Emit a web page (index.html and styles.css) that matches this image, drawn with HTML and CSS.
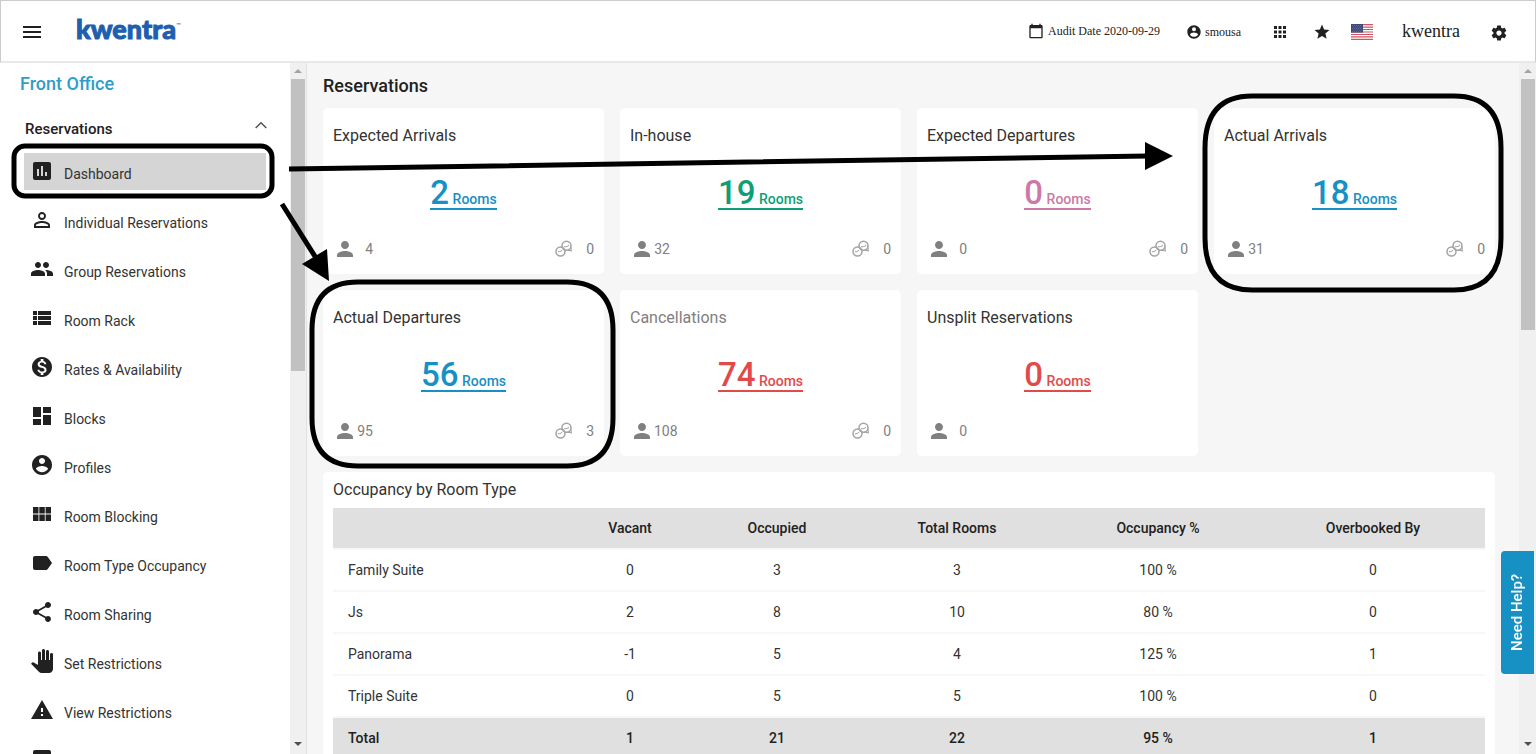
FILE: index.html
```html
<!DOCTYPE html>
<html lang="en">
<head>
  <meta charset="utf-8">
  <title>Kwentra - Front Office Dashboard</title>
  <link rel="stylesheet" href="styles.css">
</head>
<body>
  <!-- shared icons -->
  <svg class="defs" aria-hidden="true">
    <symbol id="person" viewBox="0 0 24 24"><path d="M12 12c2.21 0 4-1.79 4-4s-1.79-4-4-4-4 1.79-4 4 1.79 4 4 4zm0 2c-2.67 0-8 1.34-8 4v2h16v-2c0-2.66-5.33-4-8-4z"/></symbol>
    <symbol id="account" viewBox="0 0 24 24"><path d="M12 2C6.48 2 2 6.48 2 12s4.48 10 10 10 10-4.48 10-10S17.52 2 12 2zm0 3c1.66 0 3 1.34 3 3s-1.34 3-3 3-3-1.34-3-3 1.34-3 3-3zm0 14.2c-2.5 0-4.71-1.28-6-3.22.03-1.99 4-3.08 6-3.08 1.99 0 5.97 1.09 6 3.08-1.29 1.94-3.5 3.22-6 3.22z"/></symbol>
    <symbol id="rings" viewBox="0 0 20 20">
      <g fill="none" stroke="#a3a3a3" stroke-width="1.5">
        <circle cx="6.5" cy="12.500" r="4.500"/>
        <circle cx="12.500" cy="6.800" r="4.500"/>
        <path stroke-width="1.100" d="M4 12.500q2 1 4-1.500M10 7.500q3 1 5-1.500M16.800 7.500l.6 4.300-4-.6"/>
      </g>
    </symbol>
  </svg>

  <header class="topbar">
    <button class="icon-btn menu" aria-label="Menu"><svg viewBox="0 0 24 24"><path d="M3 18h18v-2H3v2zm0-5h18v-2H3v2zm0-7v2h18V6H3z"/></svg></button>
    <a class="logo" href="#">kwentra<sup>™</sup></a>
    <div class="tools">
      <span class="audit"><svg viewBox="0 0 24 24"><path d="M20 3h-1V1h-2v2H7V1H5v2H4c-1.100 0-2 .9-2 2v16c0 1.100.9 2 2 2h16c1.100 0 2-.9 2-2V5c0-1.100-.9-2-2-2zm0 18H4V8h16v13z"/></svg>Audit Date 2020-09-29</span>
      <a class="user" href="#"><svg><use href="#account"/></svg>smousa</a>
      <button class="icon-btn apps" aria-label="Apps"><svg viewBox="0 0 24 24"><path d="M4 8h4V4H4v4zm6 12h4v-4h-4v4zm-6 0h4v-4H4v4zm0-6h4v-4H4v4zm6 0h4v-4h-4v4zm6-10v4h4V4h-4zm-6 4h4V4h-4v4zm6 6h4v-4h-4v4zm0 6h4v-4h-4v4z"/></svg></button>
      <button class="icon-btn star" aria-label="Favourites"><svg viewBox="0 0 24 24"><path d="M12 17.270 18.180 21l-1.640-7.030L22 9.240l-7.190-.61L12 2 9.190 8.630 2 9.240l5.460 4.730L5.820 21z"/></svg></button>
      <button class="icon-btn flag" aria-label="English (US)"><svg viewBox="0 0 22 16">
        <path fill="#fff" d="M0 0h22v16H0z"/>
        <path stroke="#d0545f" stroke-width="1.230" d="M0 .6h22M0 3.100h22M0 5.500h22M0 8h22M0 10.500h22M0 12.900h22M0 15.400h22"/>
        <path fill="#3f4a78" d="M0 0h12v8.600H0z"/>
        <path stroke="#8790b3" stroke-width=".7" stroke-dasharray=".7 1.300" d="M1 1.500h10M2 3h9M1 4.500h10M2 6h9M1 7.400h10"/>
      </svg></button>
      <a class="hotel" href="#">kwentra</a>
      <button class="icon-btn gear" aria-label="Settings"><svg viewBox="0 0 24 24"><path d="M19.430 12.980c.04-.32.070-.64.070-.98s-.03-.66-.07-.98l2.110-1.650c.19-.15.240-.42.120-.64l-2-3.460c-.12-.22-.39-.3-.61-.22l-2.490 1c-.52-.4-1.080-.73-1.690-.98l-.38-2.650C14.460 2.180 14.250 2 14 2h-4c-.25 0-.46.180-.49.420l-.38 2.650c-.61.250-1.170.59-1.690.98l-2.490-1c-.23-.09-.49 0-.61.220l-2 3.460c-.13.220-.07.49.120.64l2.110 1.650c-.04.320-.07.650-.07.980s.03.660.070.980l-2.110 1.650c-.19.150-.24.420-.12.640l2 3.460c.12.220.39.300.61.220l2.490-1c.52.400 1.080.73 1.690.98l.38 2.650c.03.240.24.420.49.420h4c.25 0 .46-.18.490-.42l.38-2.650c.61-.25 1.170-.59 1.690-.98l2.490 1c.23.090.49 0 .61-.22l2-3.460c.12-.22.070-.49-.12-.64l-2.110-1.650zM12 15.500c-1.930 0-3.500-1.570-3.500-3.500s1.570-3.500 3.500-3.500 3.500 1.570 3.500 3.500-1.570 3.500-3.500 3.500z"/></svg></button>
    </div>
  </header>

  <div class="page">
    <nav class="sidebar">
      <h2>Front Office</h2>
      <button class="group">Reservations<svg viewBox="0 0 24 24"><path d="M12 8l-7 7 1.200 1.200L12 10.400l5.800 5.800L19 15z"/></svg></button>
      <a class="item active" href="#"><svg viewBox="0 0 24 24"><path d="M19 3H5c-1.100 0-2 .9-2 2v14c0 1.100.9 2 2 2h14c1.100 0 2-.9 2-2V5c0-1.100-.9-2-2-2zM9 17H7v-7h2v7zm4 0h-2V7h2v10zm4 0h-2v-4h2v4z"/></svg>Dashboard</a>
      <a class="item" href="#"><svg viewBox="0 0 24 24"><path d="M12 5.900a2.100 2.100 0 1 1 0 4.200 2.100 2.100 0 0 1 0-4.200m0 9c2.970 0 6.100 1.460 6.100 2.100v1.100H5.900V17c0-.64 3.130-2.100 6.100-2.100M12 4C9.790 4 8 5.790 8 8s1.790 4 4 4 4-1.790 4-4-1.790-4-4-4zm0 9c-2.670 0-8 1.340-8 4v3h16v-3c0-2.660-5.330-4-8-4z"/></svg>Individual Reservations</a>
      <a class="item" href="#"><svg viewBox="0 0 24 24"><path d="M16 11c1.660 0 2.990-1.340 2.990-3S17.660 5 16 5s-3 1.340-3 3 1.340 3 3 3zm-8 0c1.660 0 2.990-1.340 2.990-3S9.660 5 8 5 5 6.340 5 8s1.340 3 3 3zm0 2c-2.330 0-7 1.170-7 3.500V19h14v-2.500c0-2.330-4.670-3.500-7-3.500zm8 0c-.29 0-.62.020-.97.050 1.160.84 1.970 1.970 1.970 3.450V19h6v-2.500c0-2.330-4.670-3.500-7-3.500z"/></svg>Group Reservations</a>
      <a class="item" href="#"><svg viewBox="0 0 24 24"><path d="M3 14h4v-4H3v4zm0 5h4v-4H3v4zM3 9h4V5H3v4zm5 5h13v-4H8v4zm0 5h13v-4H8v4zM8 5v4h13V5H8z"/></svg>Room Rack</a>
      <a class="item" href="#"><svg viewBox="0 0 24 24"><path d="M12 2C6.480 2 2 6.480 2 12s4.480 10 10 10 10-4.480 10-10S17.520 2 12 2zm1.410 16.090V20h-2.670v-1.930c-1.710-.36-3.160-1.460-3.270-3.400h1.960c.1 1.050.82 1.870 2.650 1.870 1.960 0 2.400-.98 2.400-1.590 0-.83-.44-1.610-2.670-2.140-2.480-.6-4.180-1.620-4.180-3.670 0-1.720 1.390-2.840 3.110-3.210V4h2.670v1.950c1.860.45 2.790 1.860 2.850 3.390H14.300c-.05-1.110-.64-1.870-2.220-1.870-1.500 0-2.400.68-2.400 1.640 0 .84.650 1.390 2.670 1.910s4.180 1.390 4.180 3.910c-.01 1.830-1.380 2.830-3.120 3.160z"/></svg>Rates &amp; Availability</a>
      <a class="item" href="#"><svg viewBox="0 0 24 24"><path d="M3 13h8V3H3v10zm0 8h8v-6H3v6zm10 0h8V11h-8v10zm0-18v6h8V3h-8z"/></svg>Blocks</a>
      <a class="item" href="#"><svg><use href="#account"/></svg>Profiles</a>
      <a class="item" href="#"><svg viewBox="0 0 24 24"><path d="M3 11.500h5.500V5H3v6.500zm0 7.500h5.500v-6.500H3V19zm6.300 0h5.500v-6.500H9.300V19zm6.300 0H21v-6.500h-5.400V19zm-6.300-7.500h5.500V5H9.300v6.500zM15.600 5v6.500H21V5h-5.400z"/></svg>Room Blocking</a>
      <a class="item" href="#"><svg viewBox="0 0 24 24"><path d="M17.630 5.840C17.270 5.330 16.670 5 16 5H5c-1.100 0-2 .9-2 2v10c0 1.100.9 2 2 2h11c.67 0 1.270-.33 1.630-.84L22 12l-4.370-6.160z"/></svg>Room Type Occupancy</a>
      <a class="item" href="#"><svg viewBox="0 0 24 24"><path d="M18 16.080c-.76 0-1.440.3-1.960.77L8.910 12.700c.05-.23.090-.46.090-.7s-.04-.47-.09-.7l7.050-4.110c.54.500 1.250.81 2.040.81 1.660 0 3-1.340 3-3s-1.340-3-3-3-3 1.340-3 3c0 .24.040.47.090.7L8.040 9.810C7.500 9.310 6.790 9 6 9c-1.660 0-3 1.340-3 3s1.340 3 3 3c.79 0 1.500-.31 2.040-.81l7.120 4.160c-.05.210-.08.430-.08.650 0 1.610 1.310 2.920 2.920 2.920s2.920-1.310 2.920-2.920-1.310-2.920-2.920-2.920z"/></svg>Room Sharing</a>
      <a class="item" href="#"><svg viewBox="0 0 24 24"><path d="M23 5.500V20c0 2.200-1.800 4-4 4h-7.300c-1.080 0-2.100-.43-2.850-1.190L1 14.830s1.260-1.230 1.300-1.250c.22-.19.490-.29.790-.29.220 0 .42.060.6.160.04.010 4.310 2.460 4.310 2.460V4c0-.83.670-1.500 1.500-1.500S11 3.170 11 4v7h1V1.500c0-.83.670-1.500 1.500-1.500S15 .67 15 1.500V11h1V2.500c0-.83.670-1.500 1.500-1.500s1.500.67 1.500 1.500V11h1V5.500c0-.83.670-1.500 1.500-1.500s1.500.67 1.500 1.500z"/></svg>Set Restrictions</a>
      <a class="item" href="#"><svg viewBox="0 0 24 24"><path d="M1 21h22L12 2 1 21zm12-3h-2v-2h2v2zm0-4h-2v-4h2v4z"/></svg>View Restrictions</a>
      <a class="item" href="#" aria-label="More"><svg viewBox="0 0 24 24"><path d="M5 3h14c1.100 0 2 .9 2 2v14c0 1.100-.9 2-2 2H5c-1.100 0-2-.9-2-2V5c0-1.100.9-2 2-2z"/></svg></a>
    </nav>
    <div class="scrollbar side-scroll"><i class="up"></i><i class="thumb"></i><i class="down"></i></div>

    <main class="content">
      <h1>Reservations</h1>
      <div class="cards">
        <section class="card">
          <h3>Expected Arrivals</h3>
          <a class="rooms blue" href="#"><b>2</b> Rooms</a>
          <div class="foot"><svg><use href="#person"/></svg><span class="n">4</span><svg class="rings"><use href="#rings"/></svg><span class="n">0</span></div>
        </section>
        <section class="card">
          <h3>In-house</h3>
          <a class="rooms green" href="#"><b>19</b> Rooms</a>
          <div class="foot"><svg><use href="#person"/></svg><span class="n">32</span><svg class="rings"><use href="#rings"/></svg><span class="n">0</span></div>
        </section>
        <section class="card">
          <h3>Expected Departures</h3>
          <a class="rooms pink" href="#"><b>0</b> Rooms</a>
          <div class="foot"><svg><use href="#person"/></svg><span class="n">0</span><svg class="rings"><use href="#rings"/></svg><span class="n">0</span></div>
        </section>
        <section class="card">
          <h3>Actual Arrivals</h3>
          <a class="rooms blue" href="#"><b>18</b> Rooms</a>
          <div class="foot"><svg><use href="#person"/></svg><span class="n">31</span><svg class="rings"><use href="#rings"/></svg><span class="n">0</span></div>
        </section>
        <section class="card">
          <h3>Actual Departures</h3>
          <a class="rooms blue" href="#"><b>56</b> Rooms</a>
          <div class="foot"><svg><use href="#person"/></svg><span class="n">95</span><svg class="rings"><use href="#rings"/></svg><span class="n">3</span></div>
        </section>
        <section class="card">
          <h3 class="muted">Cancellations</h3>
          <a class="rooms red" href="#"><b>74</b> Rooms</a>
          <div class="foot"><svg><use href="#person"/></svg><span class="n">108</span><svg class="rings"><use href="#rings"/></svg><span class="n">0</span></div>
        </section>
        <section class="card">
          <h3>Unsplit Reservations</h3>
          <a class="rooms red" href="#"><b>0</b> Rooms</a>
          <div class="foot"><svg><use href="#person"/></svg><span class="n">0</span></div>
        </section>
      </div>

      <section class="panel">
        <h3>Occupancy by Room Type</h3>
        <table>
          <colgroup><col class="c-type"><col class="c-vacant"><col class="c-occupied"><col class="c-total"><col class="c-percent"><col class="c-over"></colgroup>
          <thead>
            <tr><th></th><th>Vacant</th><th>Occupied</th><th>Total Rooms</th><th>Occupancy %</th><th>Overbooked By</th></tr>
          </thead>
          <tbody>
            <tr><td>Family Suite</td><td>0</td><td>3</td><td>3</td><td>100 %</td><td>0</td></tr>
            <tr><td>Js</td><td>2</td><td>8</td><td>10</td><td>80 %</td><td>0</td></tr>
            <tr><td>Panorama</td><td>-1</td><td>5</td><td>4</td><td>125 %</td><td>1</td></tr>
            <tr><td>Triple Suite</td><td>0</td><td>5</td><td>5</td><td>100 %</td><td>0</td></tr>
          </tbody>
          <tfoot>
            <tr><td>Total</td><td>1</td><td>21</td><td>22</td><td>95 %</td><td>1</td></tr>
          </tfoot>
        </table>
      </section>
    </main>
    <div class="scrollbar main-scroll"><i class="up"></i><i class="thumb"></i><i class="down"></i></div>
  </div>

  <button class="help">Need Help?</button>

  <!-- callouts drawn over the page -->
  <svg class="callouts" aria-hidden="true">
    <g fill="none" stroke="#000" stroke-width="5">
      <rect x="14" y="146" width="258" height="50" rx="11"/>
      <path d="M1252 96H1454Q1501 96 1501 148V238Q1501 290 1454 290H1252Q1205 290 1205 238V148Q1205 96 1252 96Z"/>
      <path d="M358 282H567Q613 282 613 330V418Q613 466 567 466H358Q312 466 312 418V330Q312 282 358 282Z"/>
      <path d="M289 169L1148 156M282 204L316 258"/>
    </g>
    <path d="M1173 156l-28-14v28zM329 281l-27-17 25-15z"/>
  </svg>
</body>
</html>
```
FILE: styles.css
```css
* { box-sizing: border-box; }
body { margin: 0; height: 100vh; overflow: hidden; display: flex; flex-direction: column; background: #fff; color: #212121; font-family: Roboto, sans-serif; font-size: 14px; }
a { color: inherit; text-decoration: none; }
button { font: inherit; color: inherit; border: none; background: none; padding: 0; cursor: pointer; }
svg { fill: #212121; flex: none; }
h1, h2, h3 { margin: 0; }
.defs { display: none; }

/* top bar */
.topbar { height: 63px; flex: none; display: flex; align-items: center; padding: 2px 27px 0 19px; border: 1px solid #ccc; border-bottom: 2px solid #e8e8e8; }
.icon-btn { display: flex; }
.menu svg { width: 24px; height: 24px; }
.logo { margin-left: 32px; padding-bottom: 6px; color: #1f5faf; font-family: Lato, sans-serif; font-size: 27px; font-weight: 900; line-height: 32px; -webkit-text-stroke: 1px; }
.logo sup { font-size: 6px; font-weight: 400; vertical-align: 12px; line-height: 0; -webkit-text-stroke: 0; }
.tools { margin-left: auto; display: flex; align-items: center; font-family: "Liberation Serif", serif; font-size: 12px; }
.audit, .user { display: flex; align-items: center; }
.audit { padding-bottom: 2px; }
.audit svg { width: 16px; height: 16px; margin-right: 4px; }
.user { margin-left: 26px; }
.user svg { width: 16px; height: 16px; margin-right: 3px; }
.apps { margin-left: 30px; }
.apps svg { width: 18px; height: 18px; }
.star { margin-left: 24px; }
.star svg { width: 18px; height: 18px; }
.flag { margin-left: 20px; }
.flag svg { width: 22px; height: 16px; }
.hotel { margin-left: 29px; padding-bottom: 2px; font-size: 18px; }
.gear { margin-left: 30px; padding-top: 2px; }
.gear svg { width: 18px; height: 18px; }

.page { flex: 1; min-height: 0; display: flex; }

/* sidebar */
.sidebar { width: 290px; flex: none; overflow: hidden; display: flex; flex-direction: column; padding: 8px 24px 0; }
.sidebar h2 { margin-left: -4px; color: #2f9dc9; font-size: 18px; font-weight: 500; line-height: 26px; }
.group { display: flex; flex: none; justify-content: space-between; margin: 21px -6px 13px 0; padding: 0 1px; font-size: 15px; font-weight: 500; line-height: 22px; }
.group svg { width: 20px; height: 20px; margin-top: -3px; fill: #505050; }
.item { display: flex; flex: none; align-items: center; height: 37px; margin-bottom: 12px; padding: 4px 0 0 6px; color: #333; }
.item svg { width: 24px; height: 24px; margin: -6px 10px 0 0; }
.active { background: #d5d5d5; }

/* scrollbars */
.scrollbar { flex: none; display: flex; flex-direction: column; align-items: center; padding: 6px 0 8px; background: #f0f0f0; }
.scrollbar i { border: 4px solid transparent; }
.scrollbar .up { border-top: none; border-bottom-color: #a3a3a3; margin-bottom: 6px; }
.scrollbar .down { border-bottom: none; border-top-color: #505050; margin-top: auto; }
.scrollbar .thumb { width: 14px; border: none; background: #c1c1c1; }
.side-scroll { width: 17px; border-right: 1px solid #e2e2e2; }
.side-scroll .thumb { height: 292px; }
.main-scroll { width: 17px; }
.main-scroll .thumb { height: 251px; }

/* content */
.content { flex: 1; min-width: 0; overflow: hidden; padding: 11px 24px 0 16px; background: #f6f6f6; }
h1 { font-size: 18px; font-weight: 500; line-height: 24px; margin-bottom: 10px; }
h3 { color: #333; font-size: 16px; font-weight: 400; line-height: 24px; }
.cards { display: grid; grid-template-columns: repeat(4, 1fr); gap: 16px; }
.card { display: flex; flex-direction: column; height: 166px; padding: 16px 10px 12px; border-radius: 5px; background: #fff; }
h3.muted { color: #808080; }
.rooms { align-self: center; margin-top: 36px; border-bottom: 2px solid; font-weight: 500; line-height: 18px; }
.rooms b { font-size: 33px; font-weight: 500; }
.blue { color: #1790c3; }
.green { color: #0e9f76; }
.pink { color: #cc79a7; }
.red { color: #e24a4a; }
.foot { display: flex; align-items: center; margin-top: auto; color: #808080; line-height: 26px; }
.foot svg { width: 24px; height: 24px; fill: #808080; }
.foot .n { min-width: 16px; text-align: right; }
.foot .rings { width: 20px; height: 20px; margin: 0 4px 0 auto; }

/* occupancy table */
.panel { margin-top: 16px; padding: 6px 10px; border-radius: 5px; background: #fff; }
.panel h3 { margin-bottom: 6px; }
table { width: 100%; table-layout: fixed; border-collapse: collapse; }
th, td { height: 42px; padding: 0; border-bottom: 2px solid #f7f7f7; text-align: center; }
td { color: #333; }
th { height: 41px; font-weight: 500; }
th:first-child, td:first-child { padding-left: 15px; text-align: left; }
thead, tfoot { background: #e0e0e0; }
tfoot td { color: #212121; font-weight: 500; }
.c-type { width: 232px; }
.c-vacant { width: 130px; }
.c-occupied { width: 164px; }
.c-total { width: 196px; }
.c-percent { width: 206px; }
.c-over { width: 224px; }

/* overlays */
.help { position: fixed; right: 2px; top: 551px; width: 33px; height: 123px; border-radius: 0 4px 4px 0; background: #1790c3; color: #fff; font-size: 15px; font-weight: 500; writing-mode: vertical-rl; transform: rotate(180deg); }
.callouts { position: absolute; left: 0; top: 0; width: 100%; height: 100%; fill: #000; pointer-events: none; }
.callouts path { fill: inherit; }
```
